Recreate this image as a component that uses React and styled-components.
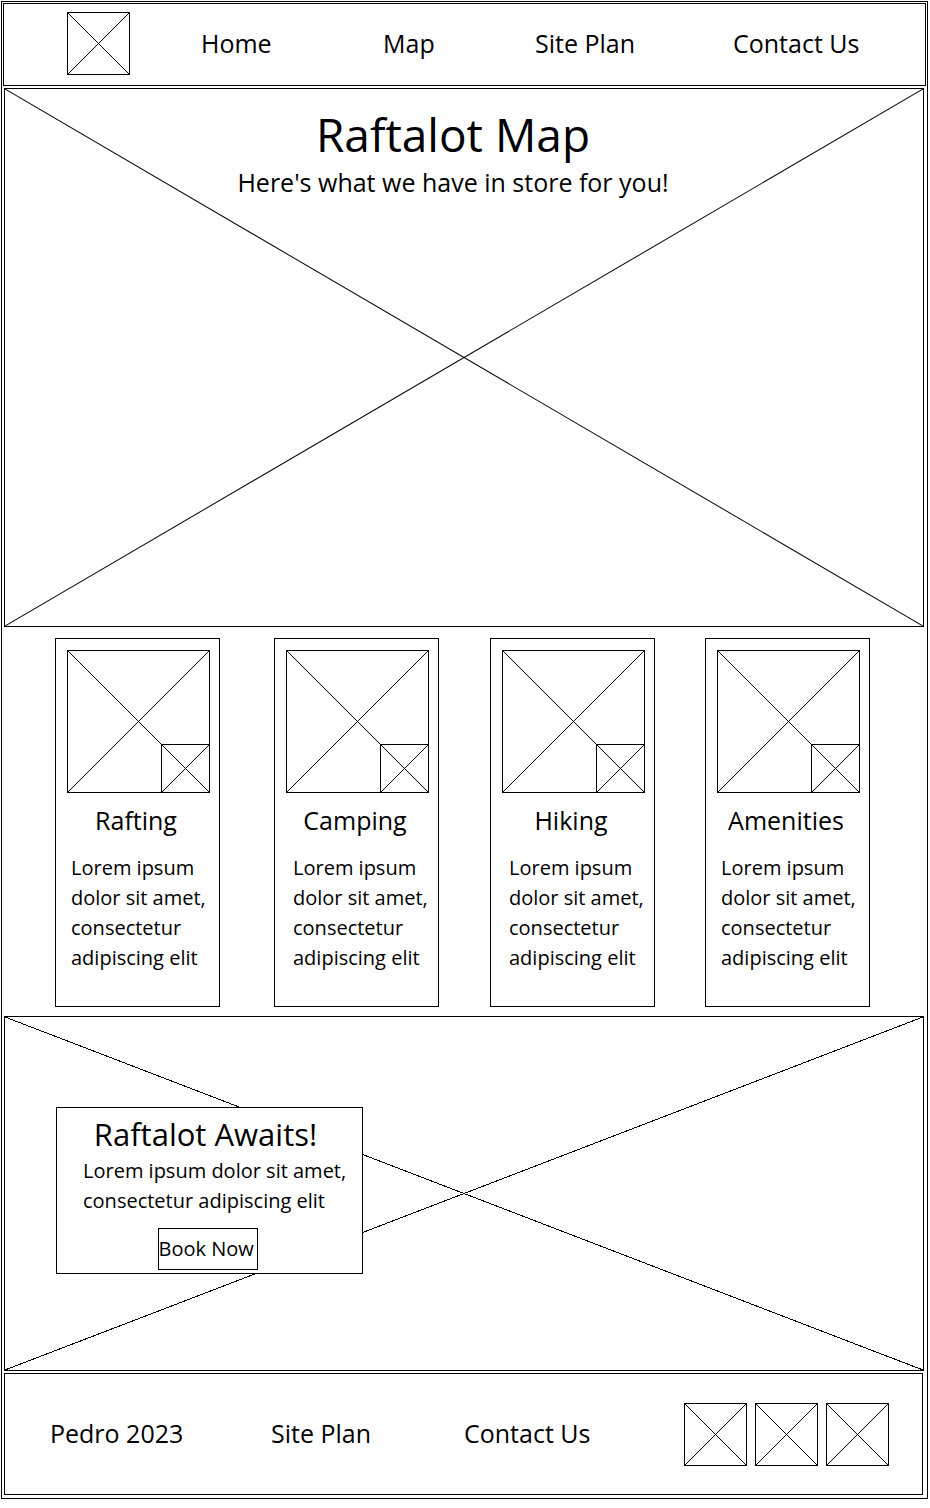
import React from "react";
import styled, { createGlobalStyle } from "styled-components";

const GlobalStyle = createGlobalStyle`
  *, *::before, *::after { box-sizing: border-box; }
  body {
    margin: 0;
    background: #fff;
    color: #000;
    font-family: "Open Sans", "Noto Sans", sans-serif;
  }
  h1, h2, h3, p { margin: 0; font-weight: 400; }
  a { color: inherit; text-decoration: none; }
`;

const Frame = styled.div`
  margin: 1px 2px 10px 1px;
  padding: 1px;
  border: 1px solid #000;
`;

const Header = styled.header`
  border: 1px solid #000;
  padding: 8px 0 10px 63px;
`;

const Nav = styled.nav`
  display: grid;
  grid-template-columns: 134fr 182fr 152fr 198fr 192fr;
  align-items: center;
`;

const TextLink = styled.a`
  justify-self: start;
  padding-bottom: 2px;
  font-size: 25px;
  line-height: 34px;
  white-space: nowrap;
`;

const Picture = styled.span`
  position: relative;
  display: block;
  width: ${({ $size }) => $size}px;
  height: ${({ $size }) => $size}px;
  border: 1px solid #000;
  background: #fff;
`;

const Lines = styled.svg`
  position: absolute;
  inset: 0;
  width: 100%;
  height: 100%;
  z-index: 0;
  stroke: #000;
  stroke-width: 1px;
  shape-rendering: crispEdges;

  line { vector-effect: non-scaling-stroke; }
`;

const Main = styled.main`
  padding: 2px 2px 2px 1px;
`;

const Hero = styled.section`
  position: relative;
  min-height: 539px;
  padding: 13px 22px 0 0;
  border: 1px solid #000;
  text-align: center;
`;

const HeroTitle = styled.h1`
  position: relative;
  font-size: 46px;
  line-height: 64px;
`;

const HeroText = styled.p`
  position: relative;
  font-size: 25px;
  line-height: 32px;
`;

const Cards = styled.section`
  display: grid;
  grid-template-columns: 219fr 216fr 215fr 165fr;
  padding: 11px 54px 9px 51px;
`;

const Card = styled.article`
  width: 165px;
  min-height: 369px;
  padding: 11px 0 0 11px;
  border: 1px solid #000;
`;

const Badge = styled.span`
  position: absolute;
  right: -1px;
  bottom: -1px;
`;

const CardTitle = styled.h2`
  margin: 10px 14px 16px 0;
  font-size: 25px;
  line-height: 34px;
  text-align: center;
`;

const CardText = styled.p`
  padding-left: ${({ $inset }) => ($inset ? 7 : 4)}px;
  font-size: 20px;
  line-height: 30px;
  white-space: nowrap;
`;

const Banner = styled.section`
  position: relative;
  min-height: 355px;
  padding: 90px 51px;
  border: 1px solid #000;
`;

const Offer = styled.div`
  position: relative;
  display: flex;
  flex-direction: column;
  align-items: center;
  width: 307px;
  padding: 4px 4px 3px 0;
  border: 1px solid #000;
  background: #fff;
`;

const OfferTitle = styled.h2`
  padding-right: 4px;
  font-size: 31px;
  line-height: 44px;
`;

const OfferText = styled.p`
  align-self: stretch;
  padding-left: 26px;
  font-size: 20px;
  line-height: 30px;
  white-space: nowrap;
`;

const BookButton = styled.button`
  width: 100px;
  height: 42px;
  margin-top: 12px;
  padding: 0 0 2px;
  border: 1px solid #000;
  background: #fff;
  color: inherit;
  font: inherit;
  font-size: 20px;
  text-align: left;
  white-space: nowrap;
  cursor: pointer;
`;

const Footer = styled.footer`
  display: grid;
  grid-template-columns: 221fr 193fr 220fr 238fr;
  align-items: center;
  min-height: 122px;
  margin: 0 3px 2px 1px;
  padding-left: 45px;
  border: 1px solid #000;
`;

const FooterText = styled.p`
  padding-bottom: 2px;
  font-size: 25px;
  line-height: 34px;
  white-space: nowrap;
`;

const Socials = styled.div`
  display: flex;
  gap: 8px;
`;

function Cross() {
  return (
    <Lines viewBox="0 0 100 100" preserveAspectRatio="none" aria-hidden="true">
      <line x1="0" y1="0" x2="100" y2="100" />
      <line x1="100" y1="0" x2="0" y2="100" />
    </Lines>
  );
}

function Placeholder({ size, children }) {
  return (
    <Picture $size={size}>
      <Cross />
      {children}
    </Picture>
  );
}

const activities = [
  { title: "Rafting", inset: false },
  { title: "Camping", inset: true },
  { title: "Hiking", inset: true },
  { title: "Amenities", inset: false },
];

export default function App() {
  return (
    <>
      <GlobalStyle />
      <Frame>
        <Header>
          <Nav aria-label="Main">
            <Placeholder size={63} />
            <TextLink href="#home">Home</TextLink>
            <TextLink href="#map">Map</TextLink>
            <TextLink href="#site-plan">Site Plan</TextLink>
            <TextLink href="#contact">Contact Us</TextLink>
          </Nav>
        </Header>

        <Main>
          <Hero>
            <Cross />
            <HeroTitle>Raftalot Map</HeroTitle>
            <HeroText>Here's what we have in store for you!</HeroText>
          </Hero>

          <Cards>
            {activities.map(({ title, inset }) => (
              <Card key={title}>
                <Placeholder size={143}>
                  <Badge>
                    <Placeholder size={49} />
                  </Badge>
                </Placeholder>
                <CardTitle>{title}</CardTitle>
                <CardText $inset={inset}>
                  Lorem ipsum
                  <br />
                  dolor sit amet,
                  <br />
                  consectetur
                  <br />
                  adipiscing elit
                </CardText>
              </Card>
            ))}
          </Cards>

          <Banner>
            <Cross />
            <Offer>
              <OfferTitle>Raftalot Awaits!</OfferTitle>
              <OfferText>
                Lorem ipsum dolor sit amet,
                <br />
                consectetur adipiscing elit
              </OfferText>
              <BookButton type="button">Book Now</BookButton>
            </Offer>
          </Banner>
        </Main>

        <Footer>
          <FooterText>Pedro 2023</FooterText>
          <TextLink href="#site-plan">Site Plan</TextLink>
          <TextLink href="#contact">Contact Us</TextLink>
          <Socials>
            <Placeholder size={63} />
            <Placeholder size={63} />
            <Placeholder size={63} />
          </Socials>
        </Footer>
      </Frame>
    </>
  );
}
